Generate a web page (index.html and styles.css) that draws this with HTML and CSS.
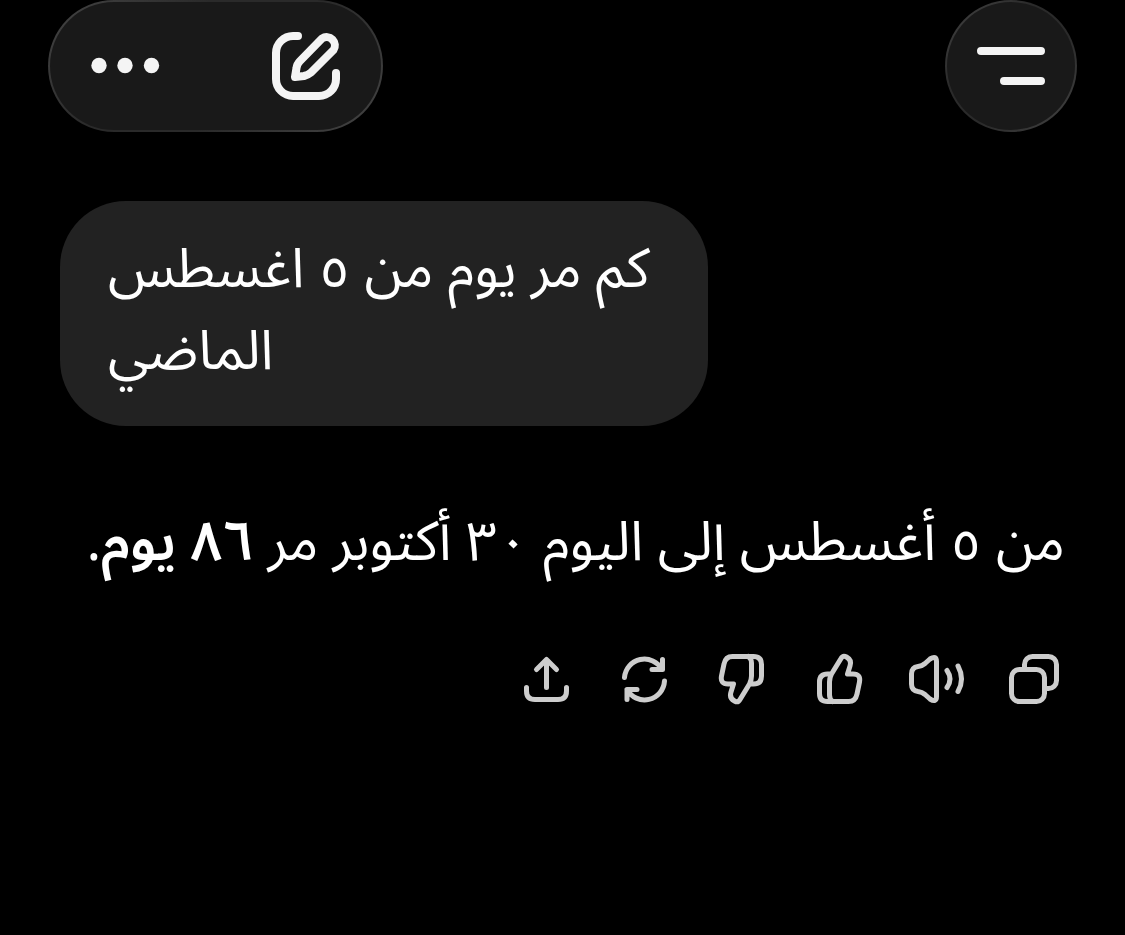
FILE: index.html
```html
<!DOCTYPE html>
<html lang="ar" dir="rtl">
<head>
	<meta charset="UTF-8">
	<meta name="viewport" content="width=device-width, initial-scale=1">
	<title>محادثة</title>
	<link rel="stylesheet" href="styles.css">
</head>
<body>
	<header class="topbar">
		<button class="glass menu" type="button" aria-label="القائمة">
			<svg width="68" height="38" viewBox="0 0 68 38"><path d="M4 4H64M27 34H64"/></svg>
		</button>
		<div class="glass tools">
			<button type="button" aria-label="محادثة جديدة">
				<svg width="68" height="68" viewBox="0 0 68 68">
					<path d="M26 4H21A17 17 0 0 0 4 21V47A17 17 0 0 0 21 64H47A17 17 0 0 0 64 47V41"/>
					<path d="M23 45L24.5 36Q25 32 28 29L50 6.5A8.3 8.3 0 0 1 61.5 18L39 40.5Q36 43 32 44Z"/>
				</svg>
			</button>
			<button type="button" aria-label="المزيد">
				<svg class="dots" width="68" height="16" viewBox="0 0 68 16">
					<circle cx="8" cy="7.5" r="7.7"/>
					<circle cx="34" cy="7.5" r="7.7"/>
					<circle cx="60.5" cy="7.5" r="7.7"/>
				</svg>
			</button>
		</div>
	</header>
	<main class="chat">
		<p class="bubble">كم مر يوم من ٥ اغسطس الماضي</p>
		<article class="answer">
			<p>من ٥ أغسطس إلى اليوم ٣٠ أكتوبر مر <strong>٨٦ يوم</strong>.</p>
			<div class="actions">
				<button type="button" aria-label="نسخ">
					<svg width="56" height="56" viewBox="0 0 56 56">
						<rect x="5.5" y="18.5" width="33" height="32" rx="8"/>
						<path d="M18.5 18.5V13.5A8 8 0 0 1 26.5 5.5H42.5A8 8 0 0 1 50.5 13.5V29.5A8 8 0 0 1 42.5 37.5H38.5"/>
					</svg>
				</button>
				<button type="button" aria-label="قراءة بصوت عالٍ">
					<svg width="56" height="56" viewBox="0 0 56 56">
						<path d="M22 8L17 12.5Q14 15 10 15.5Q3.5 16.5 3.5 23V33Q3.5 39.5 10 40.5Q14 41 17 43.5L22 48Q28.5 52 28.5 45.5V10.5Q28.5 4 22 8Z"/>
						<path d="M39 19.5Q45 28 39 36.5M50 15Q57 28 50 40.5"/>
					</svg>
				</button>
				<button type="button" aria-label="إجابة جيدة">
					<svg width="56" height="56" viewBox="0 0 56 56">
						<path d="M21.5 23L31 7.5Q33 4 36.5 6Q42 9 40 15L37.5 23H43Q51 23 49.5 31L47 43Q45.5 50.5 38.5 50.5H17.5Q9.5 50.5 9.5 42.5V31Q9.5 23 17.5 23H21.5Q19.5 27 19.5 31V44Q19.5 48 22.5 50.5"/>
					</svg>
				</button>
				<button type="button" aria-label="إجابة سيئة">
					<svg width="56" height="56" viewBox="0 0 56 56">
						<path transform="rotate(180 29.5 28)" d="M21.5 23L31 7.5Q33 4 36.5 6Q42 9 40 15L37.5 23H43Q51 23 49.5 31L47 43Q45.5 50.5 38.5 50.5H17.5Q9.5 50.5 9.5 42.5V31Q9.5 23 17.5 23H21.5Q19.5 27 19.5 31V44Q19.5 48 22.5 50.5"/>
					</svg>
				</button>
				<button type="button" aria-label="إعادة المحاولة">
					<svg width="56" height="56" viewBox="0 0 56 56">
						<path d="M10.5 26.5A20 20 0 0 1 48 18.5M48.5 8.5V18.5H38M50.5 30A20 20 0 0 1 13 38.5M13 48.5V38.5H23"/>
					</svg>
				</button>
				<button type="button" aria-label="مشاركة">
					<svg width="56" height="56" viewBox="0 0 56 56">
						<path d="M30.5 36.5V9M20.5 18.5L30.5 8.5L40.5 18.5M10.5 36.5V40Q10.5 48.5 19 48.5H42Q50.5 48.5 50.5 40V36.5"/>
					</svg>
				</button>
			</div>
		</article>
	</main>
</body>
</html>
```
FILE: styles.css
```css
body{
	margin: 0;
	background: #000;
	color: #FFF;
	font: 55px/82px "Noto Sans Arabic", "Noto Sans", sans-serif;
}
p{
	margin: 0;
}
strong{
	font-weight: 600;
}
button{
	display: flex;
	align-items: center;
	justify-content: center;
	padding: 0;
	border: 0;
	background: none;
	color: inherit;
	cursor: pointer;
}
svg{
	display: block;
	overflow: visible;
	fill: none;
	stroke: currentColor;
	stroke-linecap: round;
	stroke-linejoin: round;
}

/* top bar */
.topbar{
	display: flex;
	justify-content: space-between;
	padding: 0 48px;
}
.glass{
	height: 132px;
	box-sizing: border-box;
	border: 2px solid transparent;
	border-radius: 66px;
	background:
		linear-gradient(#191919, #191919) padding-box,
		linear-gradient(135deg, #444, #2A2A2A 35%, #2A2A2A 60%, #444) border-box;
	color: #F4F4F4;
}
.glass svg{
	stroke-width: 8;
}
.menu{
	width: 132px;
}
.tools{
	display: flex;
	justify-content: space-between;
	padding: 0 41px;
	gap: 113px;
}
.glass .dots{
	fill: currentColor;
	stroke: none;
}

/* conversation */
.chat{
	padding: 69px 60px 0;
}
.bubble{
	width: 552px;
	margin-right: auto;
	padding: 28px 48px 33px;
	border-radius: 66px;
	background: #222;
	text-align: left;
}
.answer{
	margin-top: 76px;
}
.actions{
	display: flex;
	gap: 42px;
	margin-top: 67px;
	padding: 0 3px;
	color: #CDCDCD;
}
.actions svg{
	stroke-width: 5;
}
```
